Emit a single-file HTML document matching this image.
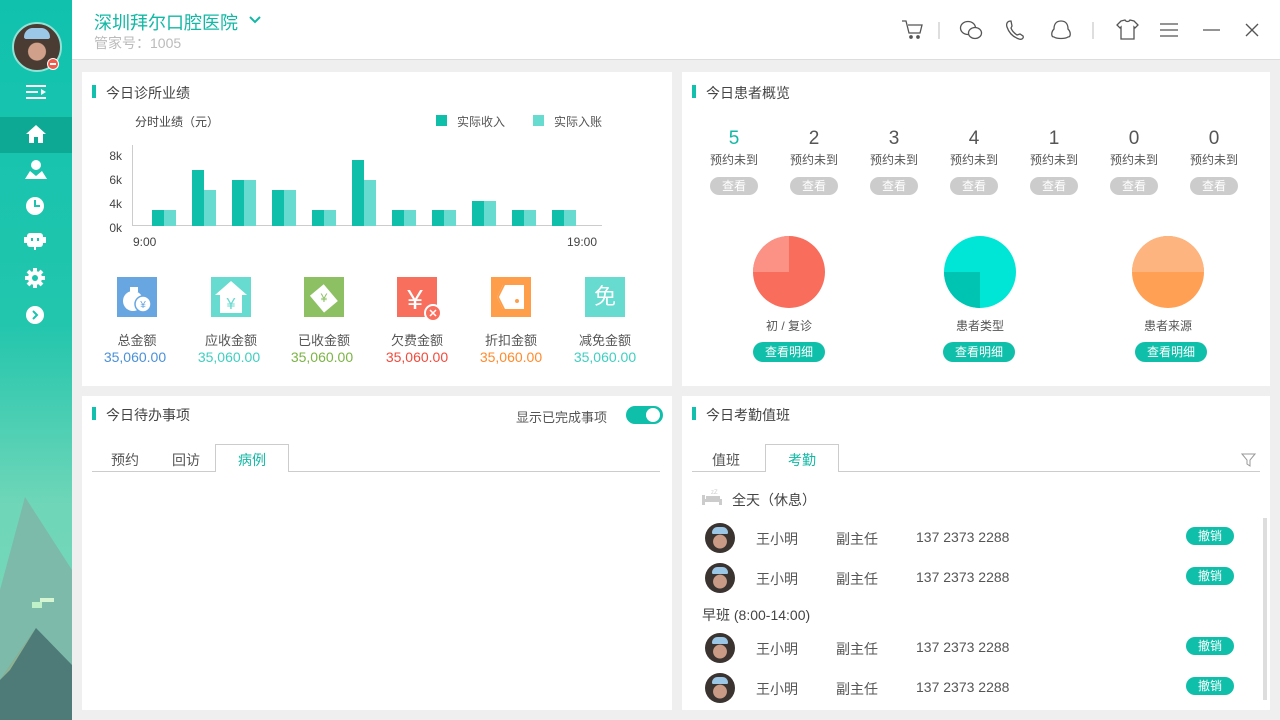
<!DOCTYPE html><html><head><meta charset="utf-8"><style>
*{margin:0;padding:0;box-sizing:border-box}
body{width:1280px;height:720px;overflow:hidden;background:#efefef;font-family:"Liberation Sans","Noto Sans CJK SC",sans-serif;color:#555;position:relative}
.a{position:absolute}
.side{left:0;top:0;width:72px;height:720px;background:linear-gradient(#10c2ae 0%,#22c6ad 45%,#6fd6b8 70%,#7bd8b8 100%);overflow:hidden}
.hdr{left:72px;top:0;width:1208px;height:60px;background:#fff;border-bottom:1px solid #ddd}
.p{background:#fff}
.t{font-size:14px;color:#444}
.bar{width:4px;height:13px;background:#13c0ae}
.c{text-align:center}
.gbtn{width:48px;height:18px;border-radius:9px;background:#ccc;color:#fff;font-size:12px;line-height:18px;text-align:center}
.tbtn{width:72px;height:20px;border-radius:10px;background:#0fbfa9;color:#fff;font-size:12px;line-height:20px;text-align:center}
.sb{width:48px;height:18px;border-radius:9px;background:#0fbfa9;color:#fff;font-size:12px;line-height:18px;text-align:center}
.av{width:30px;height:30px;border-radius:50%;background:radial-gradient(circle at 50% 62%,#c99a85 0 28%,#3a3330 30%);}
.av:before{content:"";position:absolute;left:7px;top:4px;width:16px;height:7px;border-radius:8px 8px 2px 2px;background:#9cc6e6}
.r{font-size:14px;color:#555}
</style></head><body>
<div class="a side">
 <svg class="a" style="left:0;top:480px" width="72" height="240"><polygon points="0,110 25,17 72,90 72,240 0,240" fill="#7fb3a6" opacity=".8"/><polygon points="0,200 36,148 72,185 72,240 0,240" fill="#4e7a78"/><polygon points="0,200 36,148 10,190" fill="#b9d6a3" opacity=".6"/><rect x="32" y="122" width="10" height="6" fill="#bff0c8"/><rect x="40" y="118" width="14" height="4" fill="#d5f5d3"/></svg>
 <div class="a" style="left:12px;top:22px;width:50px;height:50px;border-radius:50%;border:2px solid #8fe3d6;background:radial-gradient(circle at 50% 60%,#d0a08a 0 24%,#4a3c32 26%)"></div>
 <div class="a" style="left:24px;top:28px;width:26px;height:11px;border-radius:13px 13px 3px 3px;background:#9cc8e8"></div>
 <div class="a" style="left:47px;top:58px;width:12px;height:12px;border-radius:50%;background:#f25b4a;border:1px solid #fff"><div class="a" style="left:2px;top:4px;width:6px;height:2px;background:#fff"></div></div>
 <svg class="a" style="left:26px;top:84px" width="22" height="18"><g stroke="#fff" stroke-width="2"><line x1="0" y1="2" x2="20" y2="2"/><line x1="0" y1="8" x2="12" y2="8"/><line x1="0" y1="14" x2="20" y2="14"/></g><polygon points="15,5 20,8 15,11" fill="#fff"/></svg>
 <div class="a" style="left:0;top:117px;width:72px;height:36px;background:#0ea994"></div>
 <svg class="a" style="left:25px;top:124px" width="22" height="20"><path d="M1 10 L11 1 L21 10 L18 10 L18 19 L13 19 L13 13 L9 13 L9 19 L4 19 L4 10Z" fill="#fff"/></svg>
 <svg class="a" style="left:25px;top:159px" width="22" height="20"><circle cx="11" cy="6" r="5" fill="#fff"/><path d="M0 20 L5 12 L11 17 L17 12 L22 20Z" fill="#fff"/></svg>
 <svg class="a" style="left:25px;top:196px" width="20" height="20"><circle cx="10" cy="10" r="9" fill="#fff"/><path d="M10 4 V10 H15" stroke="#1cc3ae" stroke-width="2" fill="none"/></svg>
 <svg class="a" style="left:24px;top:231px" width="22" height="20"><rect x="3" y="2" width="16" height="14" rx="3" fill="#fff"/><rect x="0" y="6" width="3" height="6" fill="#fff"/><rect x="19" y="6" width="3" height="6" fill="#fff"/><rect x="7" y="7" width="2" height="3" fill="#1cc3ae"/><rect x="13" y="7" width="2" height="3" fill="#1cc3ae"/><rect x="10" y="16" width="2" height="3" fill="#fff"/></svg>
 <svg class="a" style="left:25px;top:268px" width="20" height="20"><circle cx="10" cy="10" r="7" fill="#fff"/><g stroke="#fff" stroke-width="4"><line x1="10" y1="0" x2="10" y2="20"/><line x1="0" y1="10" x2="20" y2="10"/><line x1="3" y1="3" x2="17" y2="17"/><line x1="17" y1="3" x2="3" y2="17"/></g><circle cx="10" cy="10" r="3" fill="#1cc3ae"/></svg>
 <svg class="a" style="left:25px;top:305px" width="20" height="20"><circle cx="10" cy="10" r="9" fill="#fff"/><path d="M8 6 L12 10 L8 14" stroke="#1cc3ae" stroke-width="2" fill="none"/></svg>
</div>
<div class="a hdr">
 <div class="a" style="left:22px;top:9px;font-size:18px;color:#13b8a5">深圳拜尔口腔医院</div>
 <svg class="a" style="left:176px;top:15px" width="14" height="10"><path d="M2 2 L7 7 L12 2" stroke="#13b8a5" stroke-width="2" fill="none"/></svg>
 <div class="a" style="left:22px;top:33px;font-size:14px;color:#bbb">管家号：1005</div>
 <svg class="a" style="left:826px;top:18px" width="440" height="24" fill="none" stroke="#555" stroke-width="1.3">
  <path d="M4 3 H8 L11 15 H22 L24 7 H10"/><circle cx="13" cy="19" r="1.2" fill="#555"/><circle cx="20" cy="19" r="1.2" fill="#555"/>
  <line x1="41" y1="4" x2="41" y2="21" stroke="#ccc"/>
  <ellipse cx="70" cy="10" rx="7.5" ry="6.5"/><ellipse cx="77" cy="15" rx="6.5" ry="5.5" fill="#fff"/>
  <path d="M113 3 C109 3 108 6 109 9 C111 15 115 19 121 21 C124 22 126 20 125 18 L122 16 L119 17 C116 15 114 13 113 10 L114 8 L113 3Z"/>
  <path d="M163 3 C157 3 156 8 156 11 C153 14 153 19 156 19 C159 21 167 21 170 19 C173 19 173 14 170 11 C170 8 169 3 163 3Z"/>
  <line x1="195" y1="4" x2="195" y2="21" stroke="#ccc"/>
  <path d="M223 3 L227 2 C228 4 231 4 232 2 L236 3 L240 7 L237 10 L236 9 V21 H223 V9 L222 10 L219 7Z"/>
  <g><line x1="262" y1="6" x2="280" y2="6"/><line x1="262" y1="12" x2="280" y2="12"/><line x1="262" y1="18" x2="280" y2="18"/></g>
  <line x1="305" y1="12" x2="322" y2="12"/>
  <line x1="348" y1="6" x2="360" y2="18"/><line x1="360" y1="6" x2="348" y2="18"/>
</svg>
</div>

<!-- panel 1 -->
<div class="a p" style="left:82px;top:72px;width:590px;height:314px">
 <div class="a bar" style="left:10px;top:13px"></div><div class="a t" style="left:24px;top:11px">今日诊所业绩</div>
 <div class="a" style="left:53px;top:41px;font-size:12px;color:#444">分时业绩（元）</div>
 <div class="a" style="left:354px;top:43px;width:11px;height:11px;background:#0fbfa9"></div><div class="a" style="left:375px;top:41px;font-size:12px;color:#555">实际收入</div>
 <div class="a" style="left:451px;top:43px;width:11px;height:11px;background:#67dbd0"></div><div class="a" style="left:472px;top:41px;font-size:12px;color:#555">实际入账</div>
 <div class="a" style="left:25px;top:72px;font-size:12px;color:#444;line-height:24px;text-align:right;width:15px">8k<br>6k<br>4k<br>0k</div>
 <svg class="a" style="left:0;top:0" width="590" height="180">
  <line x1="50.5" y1="73" x2="50.5" y2="154" stroke="#ccc"/><line x1="50" y1="153.5" x2="520" y2="153.5" stroke="#ccc"/>
  <g fill="#0fbfa9"><rect x="70" y="138" width="12" height="16"/><rect x="110" y="98" width="12" height="56"/><rect x="150" y="108" width="12" height="46"/><rect x="190" y="118" width="12" height="36"/><rect x="230" y="138" width="12" height="16"/><rect x="270" y="88" width="12" height="66"/><rect x="310" y="138" width="12" height="16"/><rect x="350" y="138" width="12" height="16"/><rect x="390" y="129" width="12" height="25"/><rect x="430" y="138" width="12" height="16"/><rect x="470" y="138" width="12" height="16"/></g>
  <g fill="#67dbd0"><rect x="82" y="138" width="12" height="16"/><rect x="122" y="118" width="12" height="36"/><rect x="162" y="108" width="12" height="46"/><rect x="202" y="118" width="12" height="36"/><rect x="242" y="138" width="12" height="16"/><rect x="282" y="108" width="12" height="46"/><rect x="322" y="138" width="12" height="16"/><rect x="362" y="138" width="12" height="16"/><rect x="402" y="129" width="12" height="25"/><rect x="442" y="138" width="12" height="16"/><rect x="482" y="138" width="12" height="16"/></g>
 </svg>
 <div class="a" style="left:51px;top:163px;font-size:12px;color:#444">9:00</div>
 <div class="a" style="left:485px;top:163px;font-size:12px;color:#444">19:00</div>
 <div class="a" style="left:35px;top:205px;width:40px;height:40px;background:#68a6e2"><svg width="40" height="40"><ellipse cx="16" cy="24" rx="10" ry="10" fill="#fff"/><rect x="13" y="10" width="8" height="5" fill="#fff"/><circle cx="26" cy="27" r="8" fill="#fff" stroke="#68a6e2" stroke-width="1.5"/><text x="26" y="31" font-size="10" fill="#68a6e2" text-anchor="middle">¥</text></svg></div>
 <div class="a" style="left:129px;top:205px;width:40px;height:40px;background:#67dbd0"><svg width="40" height="40"><path d="M20 4 L36 18 L31 18 L31 36 L9 36 L9 18 L4 18Z" fill="#fff"/><text x="20" y="32" font-size="16" fill="#67dbd0" text-anchor="middle">¥</text></svg></div>
 <div class="a" style="left:222px;top:205px;width:40px;height:40px;background:#8cc063"><svg width="40" height="40"><rect x="10" y="10" width="18" height="22" fill="#fff" transform="rotate(-40 20 20)"/><text x="20" y="25" font-size="12" fill="#8cc063" text-anchor="middle">¥</text></svg></div>
 <div class="a" style="left:315px;top:205px;width:40px;height:40px;background:#f96f5e"><svg width="46" height="46"><text x="18" y="32" font-size="28" fill="#fff" text-anchor="middle">¥</text><circle cx="36" cy="36" r="8" fill="#f96f5e" stroke="#fff" stroke-width="2"/><path d="M33 33 L39 39 M39 33 L33 39" stroke="#fff" stroke-width="1.5"/></svg></div>
 <div class="a" style="left:409px;top:205px;width:40px;height:40px;background:#ff9e4a"><svg width="40" height="40"><path d="M12 8 H33 V32 H12 L6 20Z" fill="#fff"/><path d="M12 8 L14 8 L8 20 L14 32 L12 32 L6 20Z" fill="#ff9e4a"/><circle cx="26" cy="24" r="2" fill="#ff9e4a"/></svg></div>
 <div class="a" style="left:503px;top:205px;width:40px;height:40px;background:#67dbd0;color:#fff;font-size:22px;line-height:40px;text-align:center">免</div>
 <div class="a c" style="left:0;top:258px;width:590px;font-size:13px;color:#555">
  <div class="a" style="left:5px;width:100px">总金额</div><div class="a" style="left:99px;width:100px">应收金额</div><div class="a" style="left:192px;width:100px">已收金额</div><div class="a" style="left:285px;width:100px">欠费金额</div><div class="a" style="left:379px;width:100px">折扣金额</div><div class="a" style="left:473px;width:100px">减免金额</div>
 </div>
 <div class="a c" style="left:0;top:277px;width:590px;font-size:14px">
  <div class="a" style="left:3px;width:100px;color:#4a90d9">35,060.00</div><div class="a" style="left:97px;width:100px;color:#3fcfc0">35,060.00</div><div class="a" style="left:190px;width:100px;color:#7bb346">35,060.00</div><div class="a" style="left:285px;width:100px;color:#f04b3c">35,060.00</div><div class="a" style="left:379px;width:100px;color:#ff8a2c">35,060.00</div><div class="a" style="left:473px;width:100px;color:#3fcfc0">35,060.00</div>
 </div>
</div>

<!-- panel 2 -->
<div class="a p" style="left:682px;top:72px;width:588px;height:314px">
 <div class="a bar" style="left:10px;top:13px"></div><div class="a t" style="left:24px;top:11px">今日患者概览</div>
 <div class="a" style="left:12px;top:56px;width:570px;height:140px">
  <div class="a c" style="left:0;width:80px"><div style="font-size:19px;color:#13b8a5">5</div><div style="font-size:12px;color:#555;margin-top:1px">预约未到</div><div class="gbtn" style="margin:9px auto 0">查看</div></div>
  <div class="a c" style="left:80px;width:80px"><div style="font-size:19px">2</div><div style="font-size:12px;margin-top:1px">预约未到</div><div class="gbtn" style="margin:9px auto 0">查看</div></div>
  <div class="a c" style="left:160px;width:80px"><div style="font-size:19px">3</div><div style="font-size:12px;margin-top:1px">预约未到</div><div class="gbtn" style="margin:9px auto 0">查看</div></div>
  <div class="a c" style="left:240px;width:80px"><div style="font-size:19px">4</div><div style="font-size:12px;margin-top:1px">预约未到</div><div class="gbtn" style="margin:9px auto 0">查看</div></div>
  <div class="a c" style="left:320px;width:80px"><div style="font-size:19px">1</div><div style="font-size:12px;margin-top:1px">预约未到</div><div class="gbtn" style="margin:9px auto 0">查看</div></div>
  <div class="a c" style="left:400px;width:80px"><div style="font-size:19px">0</div><div style="font-size:12px;margin-top:1px">预约未到</div><div class="gbtn" style="margin:9px auto 0">查看</div></div>
  <div class="a c" style="left:480px;width:80px"><div style="font-size:19px">0</div><div style="font-size:12px;margin-top:1px">预约未到</div><div class="gbtn" style="margin:9px auto 0">查看</div></div>
 </div>
 <svg class="a" style="left:0;top:160px" width="588" height="80">
  <circle cx="107" cy="40" r="36" fill="#f86d5c"/><path d="M107 40 L71 40 A36 36 0 0 1 107 4Z" fill="#fb9285"/>
  <circle cx="298" cy="40" r="36" fill="#00e6d6"/><path d="M298 40 L262 40 A36 36 0 0 0 298 76Z" fill="#00c4b2"/>
  <circle cx="486" cy="40" r="36" fill="#ffa055"/><path d="M450 40 A36 36 0 0 1 522 40Z" fill="#fdb47e"/>
 </svg>
 <div class="a c" style="left:57px;top:245px;width:100px;font-size:12px">初 / 复诊</div>
 <div class="a c" style="left:248px;top:245px;width:100px;font-size:12px">患者类型</div>
 <div class="a c" style="left:436px;top:245px;width:100px;font-size:12px">患者来源</div>
 <div class="a tbtn" style="left:71px;top:270px">查看明细</div>
 <div class="a tbtn" style="left:261px;top:270px">查看明细</div>
 <div class="a tbtn" style="left:453px;top:270px">查看明细</div>
</div>

<!-- panel 3 -->
<div class="a p" style="left:82px;top:396px;width:590px;height:314px">
 <div class="a bar" style="left:10px;top:11px"></div><div class="a t" style="left:24px;top:9px">今日待办事项</div>
 <div class="a" style="left:434px;top:11px;font-size:13px">显示已完成事项</div>
 <div class="a" style="left:544px;top:10px;width:37px;height:18px;border-radius:9px;background:#0fbfa9"><div class="a" style="left:20px;top:2px;width:14px;height:14px;border-radius:50%;background:#fff"></div></div>
 <div class="a" style="left:10px;top:75px;width:568px;height:1px;background:#ccc"></div>
 <div class="a" style="left:133px;top:48px;width:74px;height:28px;border:1px solid #ccc;border-bottom:none;background:#fff"></div>
 <div class="a" style="left:29px;top:54px;font-size:14px">预约</div><div class="a" style="left:90px;top:54px;font-size:14px">回访</div><div class="a" style="left:156px;top:54px;font-size:14px;color:#13b8a5">病例</div>
</div>

<!-- panel 4 -->
<div class="a p" style="left:682px;top:396px;width:588px;height:314px">
 <div class="a bar" style="left:10px;top:11px"></div><div class="a t" style="left:24px;top:9px">今日考勤值班</div>
 <div class="a" style="left:10px;top:75px;width:568px;height:1px;background:#ccc"></div>
 <div class="a" style="left:83px;top:48px;width:74px;height:28px;border:1px solid #ccc;border-bottom:none;background:#fff"></div>
 <div class="a" style="left:30px;top:54px;font-size:14px">值班</div><div class="a" style="left:106px;top:54px;font-size:14px;color:#13b8a5">考勤</div>
 <svg class="a" style="left:559px;top:57px" width="15" height="14"><path d="M1 1 H14 L9 7 V13 L6 11 V7Z" fill="none" stroke="#999"/></svg>
 <svg class="a" style="left:20px;top:91px" width="22" height="18"><g fill="#ccc"><rect x="0" y="8" width="3" height="10"/><rect x="0" y="12" width="20" height="3"/><rect x="17" y="12" width="3" height="6"/><rect x="4" y="9" width="14" height="3"/></g><text x="9" y="7" font-size="6" fill="#ccc">zZ</text></svg>
 <div class="a r" style="left:50px;top:94px;color:#444">全天（休息）</div>
 <div class="a" style="left:20px;top:209px;font-size:14px;color:#444">早班 (8:00-14:00)</div>
 <div class="a" style="left:581px;top:122px;width:4px;height:182px;background:#ddd"></div>
 <div class="a" style="left:23px;top:127px;width:32px;height:32px"><div class="a av" style="left:0;top:0"></div></div>
 <div class="a r" style="left:74px;top:133px">王小明</div><div class="a r" style="left:154px;top:133px">副主任</div><div class="a r" style="left:234px;top:133px">137 2373 2288</div><div class="a sb" style="left:504px;top:131px">撤销</div>
 <div class="a" style="left:23px;top:167px;width:32px;height:32px"><div class="a av" style="left:0;top:0"></div></div>
 <div class="a r" style="left:74px;top:173px">王小明</div><div class="a r" style="left:154px;top:173px">副主任</div><div class="a r" style="left:234px;top:173px">137 2373 2288</div><div class="a sb" style="left:504px;top:171px">撤销</div>
 <div class="a" style="left:23px;top:237px;width:32px;height:32px"><div class="a av" style="left:0;top:0"></div></div>
 <div class="a r" style="left:74px;top:243px">王小明</div><div class="a r" style="left:154px;top:243px">副主任</div><div class="a r" style="left:234px;top:243px">137 2373 2288</div><div class="a sb" style="left:504px;top:241px">撤销</div>
 <div class="a" style="left:23px;top:277px;width:32px;height:32px"><div class="a av" style="left:0;top:0"></div></div>
 <div class="a r" style="left:74px;top:283px">王小明</div><div class="a r" style="left:154px;top:283px">副主任</div><div class="a r" style="left:234px;top:283px">137 2373 2288</div><div class="a sb" style="left:504px;top:281px">撤销</div>
</div>
</body></html>
